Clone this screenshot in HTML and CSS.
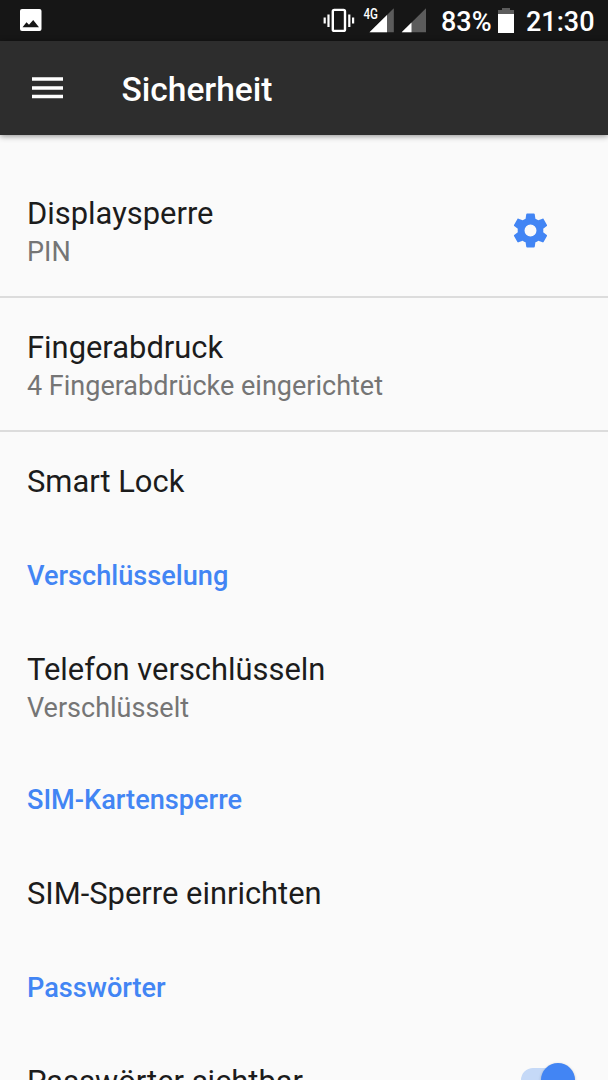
FILE: index.html
```html
<!DOCTYPE html>
<html lang="de">
<head>
<meta charset="utf-8">
<title>Sicherheit</title>
<link rel="stylesheet" href="styles.css">
</head>
<body>
<div class="screen">
  <div class="status">
    <svg class="picture" width="22" height="22" viewBox="0 0 22 22"><rect width="21.500" height="22" rx="2" fill="#fff"/><path d="M2.500 18.200 6.500 13.200 9 15.800 13.200 11 19 18.200Z" fill="#161616"/></svg>
    <svg class="signals" width="106" height="28" viewBox="0 0 106 28">
      <rect x="9.800" y="3.900" width="12.200" height="21" rx="1.500" fill="none" stroke="#fff" stroke-width="2.400"/>
      <path d="M1.700 11.500v6M5.500 8.500v12.500M26.300 8.500v12.500M30.100 11.500v6" stroke="#fff" stroke-width="2.200"/>
      <path d="M70.800 2.200V26.200H46.500Z" fill="#5c5c5c"/><path d="M64 9V26.200H46.500Z" fill="#fff"/>
      <path d="M103 2.200V26.200H78.700Z" fill="#5c5c5c"/><path d="M88.500 16.500V26.200H78.700Z" fill="#fff"/>
      <text class="network" x="40.500" y="12.700" textLength="14.500" lengthAdjust="spacingAndGlyphs">4G</text>
    </svg>
    <span class="percent">83%</span>
    <svg class="battery" width="16" height="25" viewBox="0 0 16 25"><path d="M0 2h4V0h8v2h4v4H0Z" fill="#5c5c5c"/><path d="M0 6h16v19H0Z" fill="#fff"/></svg>
    <span class="clock">21:30</span>
  </div>
  <header class="appbar">
    <svg width="31" height="22" viewBox="0 0 31 22"><path d="M0 2h31M0 11h31M0 19.500h31" stroke="#fff" stroke-width="3.300"/></svg>
    <h1>Sicherheit</h1>
  </header>
  <main class="settings">
    <div class="row ruled with-control">
      <div><div class="title">Displaysperre</div><div class="summary">PIN</div></div>
      <svg class="gear" width="41" height="41" viewBox="0 0 24 24"><path fill="#4285f4" d="M19.430 12.980c.04-.32.07-.64.07-.98s-.03-.66-.07-.98l2.110-1.650c.19-.15.24-.42.12-.64l-2-3.460c-.12-.22-.39-.3-.61-.22l-2.490 1c-.52-.4-1.080-.73-1.690-.98l-.38-2.650C14.460 2.180 14.250 2 14 2h-4c-.25 0-.46.18-.49.42l-.38 2.650c-.61.25-1.170.59-1.690.98l-2.490-1c-.23-.09-.49 0-.61.22l-2 3.460c-.13.22-.07.49.12.64l2.110 1.650c-.04.32-.07.65-.07.98s.03.66.07.98l-2.110 1.650c-.19.15-.24.42-.12.64l2 3.460c.12.22.39.3.61.22l2.490-1c.52.4 1.080.73 1.690.98l.38 2.650c.03.24.24.42.49.42h4c.25 0 .46-.18.49-.42l.38-2.650c.61-.25 1.170-.59 1.690-.98l2.490 1c.23.09.49 0 .61-.22l2-3.460c.12-.22.07-.49-.12-.64l-2.110-1.650zM12 15.500a3.500 3.500 0 1 1 0-7 3.500 3.500 0 0 1 0 7z"/></svg>
    </div>
    <div class="row ruled"><div class="title">Fingerabdruck</div><div class="summary">4 Fingerabdrücke eingerichtet</div></div>
    <div class="row single"><div class="title">Smart Lock</div></div>
    <h2>Verschlüsselung</h2>
    <div class="row plain"><div class="title">Telefon verschlüsseln</div><div class="summary">Verschlüsselt</div></div>
    <h2>SIM-Kartensperre</h2>
    <div class="row single"><div class="title">SIM-Sperre einrichten</div></div>
    <h2>Passwörter</h2>
    <div class="row with-control">
      <div class="title">Passwörter sichtbar</div>
      <div class="switch"><div class="thumb"></div></div>
    </div>
  </main>
</div>
</body>
</html>
```
FILE: styles.css
```css
* { box-sizing: border-box; }
body { margin: 0; background: #fafafa; font-family: Roboto, sans-serif; }
.screen { height: 1080px; overflow: hidden; display: flex; flex-direction: column; }
.status { height: 41px; flex: none; display: flex; align-items: flex-start; background: #161616; color: #fff; padding-left: 20px; }
.picture { margin-top: 9px; }
.signals { margin: 6px 0 0 281px; flex: none; }
.network { font: 500 14.500px Roboto, sans-serif; fill: #fff; }
.percent, .clock { font-size: 27px; font-weight: 500; line-height: 44px; white-space: nowrap; }
.percent { margin-left: 12px; width: 50px; }
.battery { margin: 8px 0 0 7px; flex: none; }
.clock { margin-left: 12px; }
.appbar { height: 94px; flex: none; display: flex; align-items: center; padding: 0 32px; background: #2d2d2d; color: #fff; box-shadow: 0 1px 6px rgba(0,0,0,.45); position: relative; }
h1 { margin: 4px 0 0 58.500px; font-size: 33.500px; font-weight: 500; line-height: 40px; }
.settings { padding-top: 29px; }
.row { height: 134px; padding: 30px 27px 28px; }
.ruled { border-bottom: 2px solid #dcdcdc; }
.single { height: 99px; }
.plain { height: 135px; }
.title { font-size: 30.900px; line-height: 40px; color: #1c1c1c; }
.summary { font-size: 27px; line-height: 36px; color: #757575; }
h2 { margin: 0; height: 89px; padding: 0 27px; font-size: 27.150px; font-weight: 500; line-height: 90px; color: #4285f4; }
.with-control { display: flex; justify-content: space-between; align-items: flex-start; }
.gear { margin: 16px 30px 0 0; }
.switch { width: 54px; height: 24px; border-radius: 12px; background: #c5d9f7; margin: 6px 6px 0 0; display: flex; justify-content: flex-end; align-items: center; }
.thumb { flex: none; width: 34px; height: 34px; border-radius: 50%; background: #4285f4; box-shadow: 0 1px 3px rgba(0,0,0,.25); }
```
